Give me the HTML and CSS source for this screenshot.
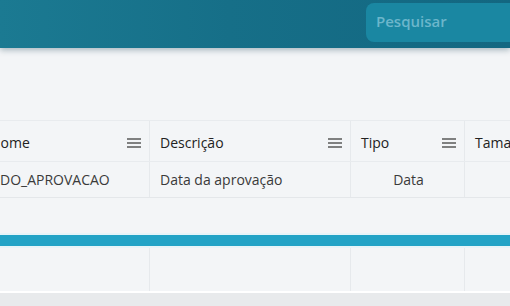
FILE: index.html
```html
<!DOCTYPE html>
<html lang="pt">
<head>
<meta charset="utf-8">
<link rel="stylesheet" href="styles.css">
</head>
<body>
<header class="topbar">
  <div class="search">Pesquisar</div>
</header>
<main class="content">
  <div class="grid">
    <div class="row head">
      <div class="cell c1"><span>Nome</span><svg class="menu" viewBox="0 0 14 10"><path d="M0 1h14M0 5h14M0 9h14"/></svg></div>
      <div class="cell c2"><span>Descrição</span><svg class="menu" viewBox="0 0 14 10"><path d="M0 1h14M0 5h14M0 9h14"/></svg></div>
      <div class="cell c3"><span>Tipo</span><svg class="menu" viewBox="0 0 14 10"><path d="M0 1h14M0 5h14M0 9h14"/></svg></div>
      <div class="cell c4"><span>Tamanho</span></div>
    </div>
    <div class="row data">
      <div class="cell c1 first">DO_APROVACAO</div>
      <div class="cell c2">Data da aprovação</div>
      <div class="cell c3 center">Data</div>
      <div class="cell c4"></div>
    </div>
  </div>
  <div class="bar"></div>
  <div class="row empty">
    <div class="cell c1"></div>
    <div class="cell c2"></div>
    <div class="cell c3"></div>
    <div class="cell c4"></div>
  </div>
  <div class="footer"></div>
</main>
</body>
</html>
```
FILE: styles.css
```css
* { box-sizing: border-box; }
html, body { margin: 0; padding: 0; }
body {
  width: 510px;
  height: 306px;
  overflow: hidden;
  background: #f3f5f7;
  font-family: "Open Sans", "DejaVu Sans", sans-serif;
  color: #2b2b2b;
}
.topbar {
  height: 48px;
  background: linear-gradient(90deg, #1b7a92 0%, #166f88 45%, #136781 100%);
  box-shadow: 0 2px 6px rgba(20, 60, 80, 0.35);
  display: flex;
  justify-content: flex-end;
  padding-top: 3px;
  position: relative;
  z-index: 2;
}
.search {
  width: 160px;
  height: 39px;
  margin-right: -16px;
  background: #1a87a2;
  border-radius: 8px;
  color: #6cb6cb;
  font-weight: 600;
  font-size: 15px;
  padding: 8px 0 0 10px;
}
.content {
  padding-top: 72px;
  overflow: hidden;
}
.grid, .row { width: 560px; }
.grid { margin-left: -20px; }
.row { display: flex; }
.head {
  height: 42px;
  border-top: 1px solid #e8ebee;
  border-bottom: 1px solid #e8ebee;
  font-weight: 500;
  font-size: 14px;
  color: #222;
}
.head .cell { padding-top: 3px; }
.data {
  height: 36px;
  border-bottom: 1px solid #e4e7ea;
  font-size: 14px;
  color: #3a3a3a;
}
.cell {
  display: flex;
  align-items: center;
  justify-content: space-between;
  padding: 0 8px 0 10px;
  border-right: 1px solid #e6e9ec;
  flex-shrink: 0;
}
.c1 { width: 170px; }
.c2 { width: 201px; }
.c3 { width: 114px; }
.c4 { width: 75px; border-right: none; }
.data .first { padding-left: 20px; }
.center { justify-content: center; }
.menu {
  width: 14px;
  height: 10px;
  stroke: #5a5a5a;
  stroke-width: 1.5;
  fill: none;
}
.bar {
  margin-top: 35px;
  height: 15px;
  background: #22a3c6;
  border-top: 2px solid #e6f4f8;
  border-bottom: 2px solid #e6f4f8;
}
.empty {
  height: 45px;
  margin-left: -20px;
  border-bottom: 2px solid #ffffff;
}
.footer {
  height: 20px;
  background: #e8eaec;
}
```
